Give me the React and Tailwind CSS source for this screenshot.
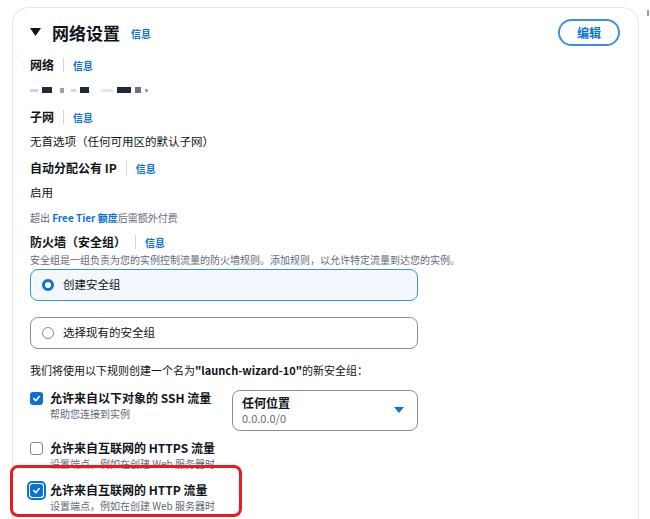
import React from 'react';

const font = { fontFamily: '"Noto Sans CJK SC", "Noto Sans", sans-serif' };

function Info({ className = '' }) {
  return <span className={`text-[10px] font-bold text-[#0972d3] ${className}`}>信息</span>;
}

function Label({ children }) {
  return (
    <div className="flex items-center h-[20px]">
      <span className="text-[12px] font-bold text-[#0f141a]">{children}</span>
      <span className="mx-[9px] h-[14px] w-px bg-[#d1d5db]"></span>
      <Info />
    </div>
  );
}

function Check({ checked, focus }) {
  const box = checked ? (
    <span className="flex items-center justify-center w-[13px] h-[13px] rounded-[3px] bg-[#0972d3]">
      <svg width="9" height="9" viewBox="0 0 10 10">
        <path d="M2 5.2 L4.2 7.4 L8 2.8" stroke="white" strokeWidth="1.8" fill="none" strokeLinecap="round" strokeLinejoin="round" />
      </svg>
    </span>
  ) : (
    <span className="block w-[13px] h-[13px] rounded-[3px] border-[1.5px] border-[#7d8998] bg-white"></span>
  );
  if (focus) {
    return <span className="flex items-center justify-center w-[19px] h-[19px] rounded-[5px] border-2 border-[#0972d3] -ml-[3px] -mr-[3px]">{box}</span>;
  }
  return box;
}

function Rule({ title, sub }) {
  return (
    <div className="ml-[7px]">
      <div className="text-[12px] leading-[16px] font-bold text-[#0f141a]">{title}</div>
      <div className="text-[10px] leading-[16px] text-[#5f6b7a]">{sub}</div>
    </div>
  );
}

export default function App() {
  return (
    <div className="w-[650px] h-[519px] bg-white overflow-hidden relative" style={font}>
      <div className="absolute right-[1px] top-[10px] w-[2px] h-[6px] bg-gray-400"></div>
      <div className="ml-[12px] mt-[7px] w-[627px] h-[540px] rounded-[16px] border border-[#e2e5e8] pl-[17px] pr-[17px] pt-[11px]">
        {/* header */}
        <div className="flex items-center justify-between h-[27px]">
          <div className="flex items-center">
            <svg width="11" height="9" viewBox="0 0 11 9" className="mr-[11px]">
              <path d="M0 0 H11 L5.5 8 Z" fill="#0f141a" />
            </svg>
            <span className="text-[17px] font-bold text-[#0f141a]">网络设置</span>
            <Info className="ml-[11px] mt-[2px]" />
          </div>
          <button className="mr-[1px] w-[62px] h-[27px] rounded-full border-2 border-[#3f8fe0] text-[12px] font-bold text-[#0972d3]">
            编辑
          </button>
        </div>

        <div className="mt-[9px]"><Label>网络</Label></div>
        <div className="mt-[5px] h-[20px] flex items-center gap-[4px] blur-[0.7px]">
          <span className="w-[8px] h-[3px] bg-gray-300"></span>
          <span className="w-[10px] h-[6px] bg-gray-800"></span>
          <span className="w-[4px] h-[5px] bg-gray-400 ml-[4px]"></span>
          <span className="w-[5px] h-[3px] bg-gray-300 ml-[3px]"></span>
          <span className="w-[9px] h-[6px] bg-gray-800"></span>
          <span className="w-[12px] h-[3px] bg-gray-200 ml-[8px]"></span>
          <span className="w-[14px] h-[6px] bg-gray-800"></span>
          <span className="w-[6px] h-[6px] bg-gray-500"></span>
          <span className="w-[3px] h-[3px] bg-gray-400"></span>
        </div>

        <div className="mt-[7px]"><Label>子网</Label></div>
        <div className="mt-[5px] h-[20px] flex items-center text-[11.5px] text-[#0f141a]">无首选项（任何可用区的默认子网）</div>

        <div className="mt-[6px]"><Label>自动分配公有 IP</Label></div>
        <div className="mt-[5px] h-[20px] flex items-center text-[11.5px] text-[#0f141a]">启用</div>

        <div className="mt-[4px] h-[20px] flex items-center text-[10px] text-[#5f6b7a]">
          超出&nbsp;<span className="font-bold text-[#0972d3]">Free Tier 额度</span>后需额外付费
        </div>

        <div className="mt-[5px]"><Label>防火墙（安全组）</Label></div>
        <div className="h-[14px] flex items-center text-[10px] text-[#5f6b7a]">
          安全组是一组负责为您的实例控制流量的防火墙规则。添加规则，以允许特定流量到达您的实例。
        </div>

        {/* radio options */}
        <div className="mt-[3px] w-[388px] h-[32px] rounded-[8px] border-[1.5px] border-[#3f8fe0] bg-[#f2f8fd] flex items-center pl-[11px]">
          <span className="w-[12px] h-[12px] rounded-full border-[3.5px] border-[#0972d3] bg-white"></span>
          <span className="ml-[9px] text-[11.5px] text-[#0f141a]">创建安全组</span>
        </div>
        <div className="mt-[16px] w-[388px] h-[32px] rounded-[8px] border-[1.5px] border-[#8c8c94] bg-white flex items-center pl-[11px]">
          <span className="w-[12px] h-[12px] rounded-full border-[1.5px] border-[#7d8998] bg-white"></span>
          <span className="ml-[9px] text-[11.5px] text-[#0f141a]">选择现有的安全组</span>
        </div>

        <div className="mt-[12px] h-[18px] flex items-center text-[11px] text-[#0f141a]">
          我们将使用以下规则创建一个名为<span className="font-bold">"launch-wizard-10"</span>的新安全组：
        </div>

        {/* SSH */}
        <div className="mt-[11px] flex items-start">
          <div className="flex items-start w-[202px]">
            <div className="mt-[2px]"><Check checked /></div>
            <Rule title="允许来自以下对象的 SSH 流量" sub="帮助您连接到实例" />
          </div>
          <div className="w-[186px] h-[41px] rounded-[8px] border-[1.5px] border-[#8c8c94] flex items-center justify-between pl-[9px] pr-[13px]">
            <div>
              <div className="text-[12px] leading-[16px] font-bold text-[#0f141a]">任何位置</div>
              <div className="text-[11px] leading-[15px] text-[#5f6b7a]">0.0.0.0/0</div>
            </div>
            <svg width="10" height="7" viewBox="0 0 10 7">
              <path d="M0 0 H10 L5 6 Z" fill="#0972d3" />
            </svg>
          </div>
        </div>

        {/* HTTPS */}
        <div className="mt-[9px] flex items-start">
          <div className="mt-[2px]"><Check /></div>
          <Rule title="允许来自互联网的 HTTPS 流量" sub="设置端点，例如在创建 Web 服务器时" />
        </div>

        {/* HTTP */}
        <div className="relative mt-[10px] flex items-start">
          <div className="absolute -left-[20px] -top-[17px] w-[232px] h-[52px] rounded-[8px] border-[3px] border-[#ea1a23]"></div>
          <div className="-mt-[1px]"><Check checked focus /></div>
          <Rule title="允许来自互联网的 HTTP 流量" sub="设置端点，例如在创建 Web 服务器时" />
        </div>
      </div>
    </div>
  );
}
